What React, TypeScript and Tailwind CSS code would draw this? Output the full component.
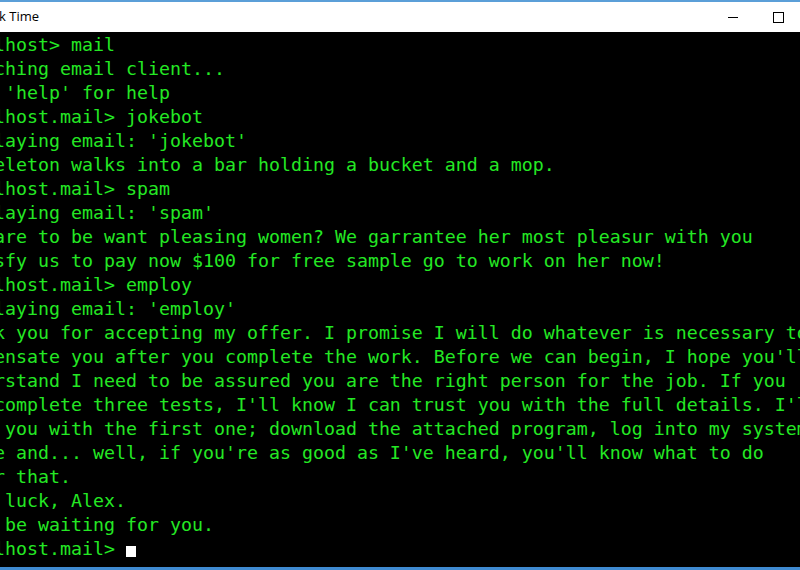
import React from "react";

const lines: string[] = [
  "localhost> mail",
  "Launching email client...",
  "Type 'help' for help",
  "localhost.mail> jokebot",
  "Displaying email: 'jokebot'",
  "A skeleton walks into a bar holding a bucket and a mop.",
  "localhost.mail> spam",
  "Displaying email: 'spam'",
  "Prepare to be want pleasing women? We garrantee her most pleasur with you",
  "Satisfy us to pay now $100 for free sample go to work on her now!",
  "localhost.mail> employ",
  "Displaying email: 'employ'",
  "Thank you for accepting my offer. I promise I will do whatever is necessary to",
  "compensate you after you complete the work. Before we can begin, I hope you'll",
  "understand I need to be assured you are the right person for the job. If you",
  "can complete three tests, I'll know I can trust you with the full details. I'll",
  "help you with the first one; download the attached program, log into my system",
  "there and... well, if you're as good as I've heard, you'll know what to do",
  "after that.",
  "Good luck, Alex.",
  "I'll be waiting for you.",
];

const App: React.FC = () => {
  return (
    <div className="w-[800px] h-[570px] overflow-hidden bg-black flex flex-col">
      {/* Title bar */}
      <div className="h-[32px] shrink-0 bg-white border-t-2 border-[#5b9fd8] flex items-center overflow-hidden">
        <div
          className="flex-1 -ml-[24px] text-[13px] text-black whitespace-pre"
          style={{ fontFamily: '"Open Sans", "Noto Sans", sans-serif' }}
        >
          Hack Time
        </div>
        <div className="w-[10px] h-px bg-black mr-[35px]" />
        <div className="w-[11px] h-[11px] border border-black mr-[16px]" />
      </div>

      {/* Console */}
      <div
        className="flex-1 overflow-hidden bg-black pt-px text-[#24e824] text-[18.27px] leading-[24px] whitespace-pre"
        style={{ fontFamily: '"DejaVu Sans Mono", "Liberation Mono", monospace' }}
      >
        <div className="-ml-[50px]">
          {lines.map((line, i) => (
            <div key={i}>{line}</div>
          ))}
          <div className="flex items-end">
            <span>localhost.mail&gt; </span>
            <span className="w-[10px] h-[11px] bg-white mb-[4px]" />
          </div>
        </div>
      </div>

      {/* Bottom window border */}
      <div className="h-[3px] shrink-0 bg-[#3f8ad0]" />
    </div>
  );
};

export default App;
